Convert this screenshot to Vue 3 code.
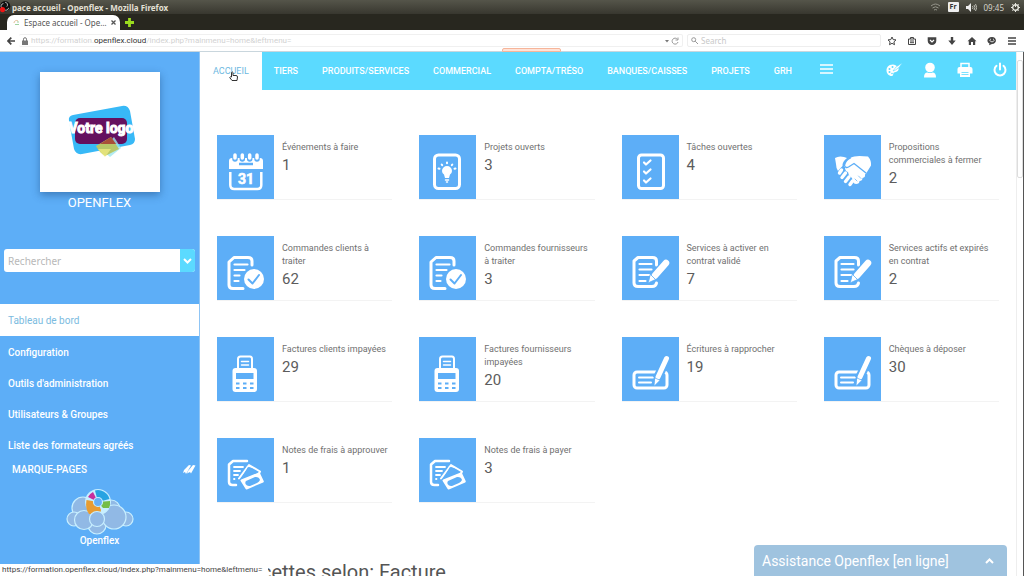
<script setup>
import { ref } from 'vue'

const query = ref('')
const webSearch = ref('')

const nav = ['TIERS', 'PRODUITS/SERVICES', 'COMMERCIAL', 'COMPTA/TRÉSO', 'BANQUES/CAISSES', 'PROJETS', 'GRH']

const sideLinks = ['Configuration', "Outils d'administration", 'Utilisateurs & Groupes', 'Liste des formateurs agréés']

const cards = [
  { icon: 'calendar', label: 'Événements à faire', count: 1 },
  { icon: 'idea', label: 'Projets ouverts', count: 3 },
  { icon: 'tasks', label: 'Tâches ouvertes', count: 4 },
  { icon: 'hands', label: 'Propositions commerciales à fermer', count: 2 },
  { icon: 'order', label: 'Commandes clients à traiter', count: 62 },
  { icon: 'order', label: 'Commandes fournisseurs à traiter', count: 3 },
  { icon: 'contract', label: 'Services à activer en contrat validé', count: 7 },
  { icon: 'contract', label: 'Services actifs et expirés en contrat', count: 2 },
  { icon: 'invoice', label: 'Factures clients impayées', count: 29 },
  { icon: 'invoice', label: 'Factures fournisseurs impayées', count: 20 },
  { icon: 'cheque', label: 'Écritures à rapprocher', count: 19 },
  { icon: 'cheque', label: 'Chèques à déposer', count: 30 },
  { icon: 'expense', label: 'Notes de frais à approuver', count: 1 },
  { icon: 'expense', label: 'Notes de frais à payer', count: 3 }
]
</script>

<template>
  <div class="window">
    <header class="titlebar">
      <svg class="rec" viewBox="0 0 14 14" aria-hidden="true">
        <circle cx="6" cy="6" r="6" fill="#111" />
        <path d="M6 1.500a3 3 0 0 1 2 5M2 8a3 3 0 0 1 2-5M10 8a3 3 0 0 1-5 2" fill="none" stroke="#ccc" />
        <circle cx="3" cy="10" r="3" fill="#f01414" />
      </svg>
      <span class="title">pace accueil - Openflex - Mozilla Firefox</span>
      <div class="tray">
        <svg width="11" height="9" viewBox="0 0 11 9" fill="none" stroke="#96968c" aria-hidden="true">
          <path d="M1 3q4.500-4 9 0M2.500 5q3-2.500 6 0M4 7q1.500-1 3 0" />
        </svg>
        <span class="lang">Fr</span>
        <svg width="11" height="9" viewBox="0 0 11 9" fill="none" stroke="#bdbdb4" aria-hidden="true">
          <path d="M0 3h2l3-3v9L2 6H0z" fill="#eee" stroke="none" />
          <path d="M6.500 3q1 1.500 0 3M8 2q2 2.500 0 5M9.500 1q2.500 3.500 0 7" />
        </svg>
        <span class="clock">09:45</span>
        <svg width="9" height="9" viewBox="0 0 9 9" fill="none" stroke="#e5e5dd" aria-hidden="true">
          <circle cx="4.500" cy="4.500" r="2.800" stroke-width="1.400" />
          <path d="M4.500 0v4M4.500 7.500V9M0 4.500h1.500M7.500 4.500H9M1.300 1.300l1 1M7.700 1.300l-1 1M1.300 7.700l1-1M7.700 7.700l-1-1" />
        </svg>
      </div>
    </header>

    <div class="tabs">
      <div class="tab">
        <svg width="7" height="7" viewBox="0 0 7 7" fill="none" aria-hidden="true">
          <path d="M1 4a2.500 2.500 0 0 1 4-2" stroke="#e4bd95" /><path d="M2 5.500h4M5 2v2" stroke="#9fd3a1" />
        </svg>
        <span class="tab-text">Espace accueil - Ope…</span>
        <button class="plain" aria-label="Fermer l'onglet">
          <svg width="5" height="5" viewBox="0 0 5 5" stroke="#555" stroke-width="1.300"><path d="M.5.5l4 4M4.500.5l-4 4" /></svg>
        </button>
      </div>
      <button class="plain" aria-label="Nouvel onglet">
        <svg width="9" height="9" viewBox="0 0 9 9" stroke="#9bdc1e" stroke-width="2.800"><path d="M4.500 0v9M0 4.500h9" /></svg>
      </button>
    </div>

    <div class="toolbar">
      <button class="plain back" aria-label="Précédent">
        <svg width="8" height="8" viewBox="0 0 8 8" fill="none" stroke="#444" stroke-width="1.700"><path d="M8 4H1.500M4.300.7L1 4l3.300 3.300" /></svg>
      </button>
      <div class="address">
        <svg width="6" height="8" viewBox="0 0 6 8" aria-hidden="true">
          <path d="M1.500 4V2.200a1.500 1.500 0 0 1 3 0V4" fill="none" stroke="#777" /><path d="M0 3.500h6V8H0z" fill="#777" />
        </svg>
        <span class="url">https://formation.<b>openflex.cloud</b>/index.php?mainmenu=home&amp;leftmenu=</span>
        <svg class="reload" width="14" height="8" viewBox="0 0 14 8" aria-hidden="true">
          <path d="M0 3h4L2 5.500z" fill="#777" />
          <path d="M12.500 2.300A3 3 0 1 0 13 5M13 .5v2.500h-2.500" fill="none" stroke="#999" />
        </svg>
      </div>
      <label class="websearch">
        <svg width="7" height="7" viewBox="0 0 7 7" fill="none" stroke="#999" aria-hidden="true"><circle cx="2.700" cy="2.700" r="2" /><path d="M4.200 4.200L7 7" /></svg>
        <input v-model="webSearch" type="text" placeholder="Search" aria-label="Search" />
      </label>
      <div class="tools">
        <button class="plain" aria-label="Marquer cette page">
          <svg width="10" height="10" viewBox="0 0 10 10" fill="none" stroke="#444"><path d="M5 1l1.200 2.600 2.800.3-2.100 2 .6 2.800L5 7.300 2.500 8.700l.6-2.800L1 3.900l2.800-.3z" /></svg>
        </button>
        <button class="plain" aria-label="Marque-pages">
          <svg width="10" height="10" viewBox="0 0 10 10" fill="none" stroke="#444"><path d="M1.500 3h7v5.500h-7zM3.500 3V1.500h3V3M3 5h4M3 6.700h4" /></svg>
        </button>
        <button class="plain" aria-label="Pocket">
          <svg width="10" height="10" viewBox="0 0 10 10"><path d="M.7 1.200h8.600v3.500a4.300 4.300 0 0 1-8.600 0z" fill="#444" /><path d="M3 4l2 2 2-2" fill="none" stroke="#fff" stroke-width="1.200" /></svg>
        </button>
        <button class="plain" aria-label="Téléchargements">
          <svg width="10" height="10" viewBox="0 0 10 10"><path d="M3.800 1h2.400v3.500h2.500L5 9 1.300 4.500h2.500z" fill="#444" /></svg>
        </button>
        <button class="plain" aria-label="Accueil">
          <svg width="10" height="10" viewBox="0 0 10 10"><path d="M5 1l4.500 4.200H8.200V9H6V6H4v3H1.800V5.200H.5z" fill="#444" /></svg>
        </button>
        <button class="plain" aria-label="Discussion">
          <svg width="10" height="10" viewBox="0 0 10 10"><path d="M5 1c5 0 5.500 6.500 0 7L2 9.300l.5-1.700C-1 6 0 1 5 1z" fill="#444" /><path d="M2.500 4.500q2.500 3 5 0M3 3.300h1M6 3.300h1" fill="none" stroke="#fff" stroke-width=".8" /></svg>
        </button>
        <button class="plain" aria-label="Menu">
          <svg width="10" height="10" viewBox="0 0 10 10" stroke="#444" stroke-width="1.600"><path d="M1 2h8M1 5h8M1 8h8" /></svg>
        </button>
      </div>
      <i class="notice"></i>
    </div>

    <div class="page">
      <aside class="sidebar">
        <div class="brand">
          <svg viewBox="0 0 120 120" role="img" aria-label="Votre logo">
            <path d="M33 43l49-9q6-1 8 5l5 28q0 5-5 6l-48 9q-6 1-8-5l-5-28q-1-5 4-6z" fill="#38b9f7" />
            <rect x="35" y="46" width="52" height="26" rx="5" fill="#64105f" />
            <path d="M62 78l12-13 7 11-11 9z" fill="#9fe6ee" opacity=".8" />
            <path d="M56 74l15-9 8 12-14 7q-6-4-9-10z" fill="#b7c769" />
            <path d="M60 72l11-7 5 7z" fill="#a84f38" />
            <path d="M58 77h13l-6 8z" fill="#f4ee85" opacity=".7" />
            <text x="61" y="61" text-anchor="middle" font-family="Roboto, sans-serif" font-size="14" font-weight="700" fill="#fff" stroke="#fff" stroke-width="1">Votre logo</text>
          </svg>
        </div>
        <p class="company">OPENFLEX</p>
        <form class="search" @submit.prevent>
          <input v-model="query" type="text" placeholder="Rechercher" aria-label="Rechercher" />
          <button aria-label="Options de recherche">
            <svg width="9" height="6" viewBox="0 0 9 6" fill="none" stroke="#fff" stroke-width="2"><path d="M1 1l3.500 3.500L8 1" /></svg>
          </button>
        </form>
        <nav class="side-nav">
          <a class="current" href="#tableau">Tableau de bord</a>
          <a v-for="item in sideLinks" :key="item" href="#">{{ item }}</a>
        </nav>
        <div class="bookmarks">
          <span>MARQUE-PAGES</span>
          <svg width="13" height="11" viewBox="0 0 13 11" fill="#fff" aria-hidden="true"><path d="M1 6l5-5 2 .5L3 10l-1-2-2 1zM5 7l5-6 2.500.5L8 9.500 7 8 4 9.500z" /></svg>
        </div>
        <div class="signature">
          <svg width="68" height="46" viewBox="0 0 68 46" aria-hidden="true">
            <g fill="#91b9e5" stroke="#c8efff" stroke-width="1.200">
              <circle cx="17" cy="19" r="11" /><circle cx="45" cy="20" r="9" />
              <circle cx="8" cy="30" r="7" /><circle cx="60" cy="30" r="7" />
              <circle cx="31" cy="36" r="9" />
              <circle cx="18" cy="31" r="9.500" /><circle cx="48" cy="28" r="12" />
            </g>
            <circle cx="32" cy="13" r="13" fill="#c8efff" />
            <path d="M32 13L20.500 11Q19 20 23 25h11l1-4z" fill="#e79c33" />
            <path d="M32 13L22 8a12 12 0 0 1 5-5z" fill="#c72f9e" />
            <path d="M32 13L29 1.500A12 12 0 0 1 43.500 10z" fill="#27a3e2" />
            <path d="M32 13l12-1a12 12 0 0 1-1 7h-6z" fill="#75bd46" />
            <circle cx="32" cy="13" r="4.500" fill="#66aff4" stroke="#c8efff" stroke-width="1.200" />
            <circle cx="31" cy="30" r="7.500" fill="#91b9e5" stroke="#c8efff" stroke-width="1.200" />
          </svg>
          <span>Openflex</span>
        </div>
      </aside>

      <main class="main">
        <nav class="topnav">
          <a class="active" href="#accueil">ACCUEIL
            <svg class="pointer" width="9" height="11" viewBox="0 0 9 11" fill="#fff" stroke="#333" aria-hidden="true"><path d="M2.500 6V1.500q1-1 1.500 0V4.500h3q1.500 0 1.500 1.500L8 9.500H3L.7 6.500q.5-1 1.800-.5z" /></svg>
          </a>
          <a v-for="item in nav" :key="item" href="#">{{ item }}</a>
          <button class="plain burger" aria-label="Plus">
            <svg width="13" height="10" viewBox="0 0 13 10" stroke="#fff" stroke-width="1.500"><path d="M0 1h13M0 5h13M0 9h13" /></svg>
          </button>
          <div class="actions">
            <button class="plain" aria-label="Thème">
              <svg width="17" height="16" viewBox="0 0 17 16">
                <path d="M7 2.500C2 2.500.5 6 .5 8.500c0 3 2.500 5.500 5 5.500 2 0 1.500-2 2-3s2-.5 3.500-1.500 2-2.500 1.500-3.500S10 2.500 7 2.500z" fill="#fff" />
                <path d="M7 9l3-4L16.500.8 13 5.500 9.500 8z" fill="#fff" stroke="#5bdaff" stroke-width=".6" />
                <g fill="#5bdaff"><circle cx="3.500" cy="7" r="1" /><circle cx="6.500" cy="5" r="1" /><circle cx="3.500" cy="10" r="1" /><circle cx="6" cy="11.500" r=".8" /></g>
              </svg>
            </button>
            <button class="plain" aria-label="Utilisateur">
              <svg width="14" height="16" viewBox="0 0 14 16" fill="#fff"><circle cx="7" cy="5.500" r="4.800" /><path d="M1 15.500q0-5 3.500-5 2.500 1.200 5 0 3.500 0 3.500 5z" /></svg>
            </button>
            <button class="plain" aria-label="Imprimer">
              <svg width="16" height="16" viewBox="0 0 16 16">
                <path d="M4 6V1.500h8V6" fill="none" stroke="#fff" stroke-width="1.500" />
                <path d="M2.500 5h11q2 0 2 2v4.500H13v3.500H3v-3.500H.5V7q0-2 2-2z" fill="#fff" />
                <path d="M4.500 10.500h7M4.500 12.500h7" stroke="#5bdaff" stroke-width=".8" />
              </svg>
            </button>
            <button class="plain" aria-label="Déconnexion">
              <svg width="14" height="16" viewBox="0 0 14 16" fill="none" stroke="#fff" stroke-width="2" stroke-linecap="round"><path d="M7 1.500v6M3.500 3.800a5.500 5.500 0 1 0 7 0" /></svg>
            </button>
          </div>
        </nav>

        <section class="cards">
          <article v-for="(card, i) in cards" :key="i" class="card">
            <svg class="icon" width="57" height="64" viewBox="0 0 57 64" fill="none" stroke="#fff" stroke-width="3" stroke-linecap="round" stroke-linejoin="round" aria-hidden="true">
              <g v-if="card.icon === 'calendar'">
                <path d="M12 34v-8q0-3 3-3h28q3 0 3 3v8z" fill="#fff" stroke="none" />
                <path d="M13.300 37v13q0 4 4 4h23q4 0 4-4V37" stroke-width="2.500" stroke-linecap="butt" />
                <path d="M18 20v4M25.300 20v4M32.700 20v4M40 20v4" stroke="#5daef7" stroke-width="5.500" />
                <path d="M18 20v3M25.300 20v3M32.700 20v3M40 20v3" stroke-width="3.500" />
                <path d="M22 29h14" stroke="#5daef7" stroke-width="2.500" stroke-linecap="butt" />
                <text x="29" y="49" text-anchor="middle" font-family="Roboto, sans-serif" font-size="14" font-weight="700" fill="#fff" stroke-width=".6">31</text>
              </g>
              <g v-else-if="card.icon === 'idea'">
                <rect x="15.500" y="20" width="25" height="33.500" rx="4" />
                <path d="M23 36a5 5 0 0 1 10 0q0 2-2 3.500L30 43h-4l-1-3.500q-2-1.500-2-3.500z" fill="#fff" stroke="none" />
                <path d="M26.500 45h3M27.500 47h1" stroke-width="1.500" />
                <path d="M19.500 33.500l1 .3M22.700 29.500l.5.700M28 27.500v.8M33.300 29.500l-.5.700M36.500 33.500l-1 .3" stroke-width="2" />
              </g>
              <g v-else-if="card.icon === 'tasks'">
                <rect x="16.500" y="20" width="25" height="33.500" rx="3" />
                <path d="M22 27.500l2 2 4.500-4M22 36.500l2 2 4.500-4M22 45.500l2 2 4.500-4" stroke-width="2.200" />
              </g>
              <g v-else-if="card.icon === 'hands'">
                <path d="M11 23q4-2.500 9-1l3 1q-5 4-4.500 8-3 3-4.500 5-2-3-2-7z" fill="#fff" stroke="none" />
                <path d="M17.500 35l-2 3M21.500 38l-3.500 4.500M25 42l-3.500 4.500M28.500 46l-2.500 3.500" stroke-width="3.400" />
                <path d="M20 32q1.500-7 7-9.500Q31 20 44 21.500q3.500 4 3 9L43 37q-1 2-2 2.500.5 3-2.500 3.500 0 3-3 3 0 3-3.500 3-2 0-3-2l-1-4-3-2.500-1-3.500q-3-.5-3-5z" fill="#fff" stroke="none" />
                <path d="M26.500 23q-5 2-6 7.500 1 3 4 1.500L30 28.500 42 38" stroke="#5daef7" stroke-width="1.300" />
                <path d="M31 44l2 2M34.500 41l2.500 2.500" stroke="#5daef7" stroke-width=".7" />
              </g>
              <g v-else-if="card.icon === 'order'">
                <path d="M35 29v-4q0-3.500-4-3.500H17L12 26V49q0 3.500 4 3.500h10" />
                <path d="M17.500 28.500h13M17.500 34h10M17.500 39.500h5M17.500 45h4" stroke-width="2.200" />
                <circle cx="37" cy="43" r="10" fill="#fff" stroke="none" />
                <path d="M31.500 43.500l4 4L42 39" stroke="#5daef7" stroke-width="2" />
              </g>
              <g v-else-if="card.icon === 'contract'">
                <path d="M34.500 29v-4q0-3.500-4-3.500H16L12 25v22q0 3.500 4 3.500h14q4 0 4.500-3.500" />
                <path d="M17.500 28h12M17.500 33.500h12M17.500 39h10M17.500 45h6" stroke-width="2.200" />
                <path d="M44 27L32 41" stroke="#5daef7" stroke-width="9" stroke-linecap="butt" />
                <path d="M44 27L33 39.500" stroke-width="6.500" />
                <path d="M28.500 38.500l5 5-6.500 3q-.7.200-.5-.6z" fill="#fff" stroke="#5daef7" stroke-width=".8" />
              </g>
              <g v-else-if="card.icon === 'invoice'">
                <path d="M15.500 34q0-3 3-3h18.500q3 0 3 3v18q0 3-3 3H18.500q-3 0-3-3z" fill="#fff" stroke="none" />
                <path d="M21 32V22q0-2.500 2.500-2.500H33q2 0 2 2.500v10z" fill="#5daef7" stroke-width="2" />
                <path d="M24.500 24.500h7M24.500 28h7" stroke-width="1.500" />
                <path d="M19 36h17.500v6H19z" fill="#5daef7" stroke="none" />
                <path d="M19 46.500h3.500M26 46.500h3.500M33 46.500h3.500M19 51h3.500M26 51h3.500M33 51h3.500" stroke="#5daef7" stroke-width="1.800" stroke-linecap="butt" />
              </g>
              <g v-else-if="card.icon === 'cheque'">
                <rect x="12" y="35" width="33" height="16" rx="3" />
                <path d="M17 40.500h14M17 45.500h12" stroke-width="2" />
                <path d="M45 21L35 42" stroke="#5daef7" stroke-width="9" stroke-linecap="butt" />
                <path d="M44.500 21.500L36 40" stroke-width="5" />
                <path d="M33 41l5 2.300-5 5q-.8.500-.8-.5z" fill="#fff" stroke="#5daef7" stroke-width=".7" />
              </g>
              <g v-else>
                <path d="M30 23H16L12 26.500V44q0 3 3.500 3H19" stroke-width="2.500" />
                <path d="M17 29h9M17 33h6M17 37h4M17 41h.5" stroke-width="1.800" />
                <path d="M22 40.500L32 27l11 6.500-1 2" stroke-width="2" fill="#5daef7" />
                <path d="M31 29l8 5-6 1.500-8 3.500z" stroke="none" fill="#5daef7" />
                <path d="M29 28h6l2 2.500z" fill="#fff" stroke="none" />
                <path d="M24.500 42.500L42 35.500l3.800 8L29.500 50.500z" fill="#fff" stroke-width="2" />
                <path d="M29 43l9-4q4-.5 5 3-1 2-3 3l-7 3q-3 .5-4.500-2-.5-2 .5-3z" fill="#5daef7" stroke="none" />
              </g>
            </svg>
            <div class="info">
              <h2>{{ card.label }}</h2>
              <strong>{{ card.count }}</strong>
            </div>
          </article>
        </section>
        <h1 class="chart-title">Recettes selon: Facture</h1>
      </main>
      <div class="scrollbar"><i></i></div>
    </div>

    <div class="status">https://formation.openflex.cloud/index.php?mainmenu=home&amp;leftmenu=</div>
    <button class="assist">
      <span>Assistance Openflex [en ligne]</span>
      <svg width="9" height="6" viewBox="0 0 9 6" fill="none" stroke="#fff" stroke-width="2"><path d="M1 5l3.500-3.500L8 5" /></svg>
    </button>
  </div>
</template>

<style>
body { background: #fff; }
</style>

<style scoped>
* { box-sizing: border-box; }
.window { position: relative; height: 100vh; display: flex; flex-direction: column; overflow: hidden; font-family: Roboto, "Liberation Sans", sans-serif; color: #666; background: #fff; }
a { color: inherit; text-decoration: none; }
svg { flex: none; display: block; }
.plain { border: 0; padding: 0; background: none; display: flex; align-items: center; }
input { min-width: 0; border: 0; outline: 0; padding: 0; background: transparent; color: #555; }

.titlebar { height: 14px; flex: none; display: flex; align-items: center; padding-right: 4px; background: linear-gradient(#55554a, #38372f); font-family: "Noto Sans", sans-serif; font-size: 8px; color: #e3e0d6; }
.rec { width: 12px; height: 12px; }
.title { font-weight: 700; white-space: nowrap; }
.tray { margin-left: auto; display: flex; align-items: center; gap: 7px; }
.lang { padding: 0 2px; background: #eee; color: #333; border-radius: 1px; line-height: 10px; font-size: 7px; font-weight: 700; }
.clock { color: #d5d3c9; }

.tabs { height: 16px; flex: none; display: flex; align-items: flex-end; gap: 5px; padding-left: 7px; background: #28271f; font-family: "Noto Sans", sans-serif; }
.tabs > .plain { height: 15px; }
.tab { width: 113px; height: 15px; display: flex; align-items: center; gap: 4px; padding: 0 6px; background: #fff; border-radius: 7px 7px 0 0; font-size: 8px; color: #555; }
.tab-text { flex: 1; white-space: nowrap; }

.toolbar { position: relative; height: 22px; flex: none; display: flex; align-items: center; gap: 4px; padding: 0 7px; background: #fff; border-bottom: 1px solid #c9d6dd; font-size: 8px; }
.back { width: 8px; }
.address { flex: 1; display: flex; align-items: center; gap: 3px; height: 13px; padding: 0 3px; border: 1px solid #f0f0f0; border-left: 0; border-radius: 2px; color: #d2d2d2; }
.url { white-space: nowrap; }
.url b { font-weight: 400; color: #333; }
.reload { margin-left: auto; }
.websearch { width: 194px; height: 13px; display: flex; align-items: center; gap: 3px; padding: 0 3px; border: 1px solid #eee; border-radius: 2px; }
.websearch input { flex: 1; font: 8px "Noto Sans", sans-serif; }
.websearch input::placeholder { color: #c8c8c8; }
.tools { display: flex; gap: 10px; padding-left: 2px; }
.notice { position: absolute; left: 49%; bottom: -1px; width: 59px; height: 4px; border: 1px solid #f6b59a; background: #ffe2d6; border-radius: 2px 2px 0 0; }

.page { flex: 1; min-height: 0; display: flex; border-right: 1px solid #555; }
.sidebar { width: 200px; flex: none; background: #5daef7; color: #fff; display: flex; flex-direction: column; border-right: 1px solid #8fc5f5; }
.brand { width: 120px; height: 120px; flex: none; margin: 20px 0 0 40px; background: #fff; box-shadow: 0 3px 8px rgba(20, 60, 110, .45); }
.company { margin: 3px 0 0; text-align: center; font-size: 13px; line-height: 16px; }
.search { display: flex; height: 23px; margin: 38px 4px 0; border-radius: 3px; overflow: hidden; background: #fff; flex: none; }
.search input { flex: 1; padding-left: 4px; font: 10px "Noto Sans", sans-serif; }
.search input::placeholder { color: #b8b8b8; }
.search button { width: 15px; border: 0; padding: 0; background: #5bdaff; display: flex; align-items: center; justify-content: center; }
.side-nav { display: flex; flex-direction: column; margin-top: 32px; font-size: 10px; font-weight: 500; }
.side-nav a { height: 31px; line-height: 31px; padding-left: 8px; }
.side-nav a.current { height: 32px; line-height: 33px; margin-bottom: 1px; background: #fff; color: #7bbbe0; font-weight: 400; }
.bookmarks { display: flex; justify-content: space-between; align-items: center; padding: 0 3px 0 12px; height: 16px; font-size: 10px; font-weight: 500; }
.signature { display: flex; flex-direction: column; align-items: center; margin-top: 12px; font-size: 10px; font-weight: 500; line-height: 12px; }

.main { flex: 1; min-width: 0; overflow: hidden; }
.topnav { height: 38px; display: flex; background: #5bdaff; color: #fff; font-size: 9px; font-weight: 500; line-height: 38px; }
.topnav > a { padding: 0 12px; white-space: nowrap; }
.topnav > a.active { position: relative; padding: 0 13px; background: #fff; color: #6db9df; font-weight: 400; }
.pointer { position: absolute; left: 29px; top: 19px; }
.burger { margin-left: 16px; height: 34px; }
.actions { margin-left: auto; display: flex; align-items: center; gap: 20px; padding-right: 9px; height: 35px; }

.cards { display: grid; grid-template-columns: repeat(4, 1fr); gap: 36px 27px; padding: 45px 17px 0 17px; }
.card { display: flex; height: 65px; border-bottom: 1px solid #f3f3f3; }
.icon { background: #5daef7; }
.info { padding: 6px 2px 0 8px; }
.info h2 { margin: 0; font-size: 9px; font-weight: 400; line-height: 13px; color: #707070; }
.info strong { display: block; font-size: 15px; font-weight: 400; line-height: 22px; color: #5c5c5c; }
.chart-title { margin: 57px 0 0 38px; font-size: 20px; font-weight: 400; line-height: 24px; color: #555; white-space: nowrap; }
.scrollbar { width: 7px; flex: none; padding-top: 8px; border-left: 1px solid #eee; background: #fff; }
.scrollbar i { display: block; height: 118px; border: 1px solid #ddd; border-radius: 2px; }

.status { position: absolute; left: 0; bottom: 0; height: 12px; padding: 0 6px 0 2px; background: #fff; font-size: 8px; line-height: 12px; color: #444; white-space: nowrap; }
.assist { position: absolute; right: 17px; bottom: 0; width: 253px; height: 31px; display: flex; align-items: center; justify-content: space-between; padding: 0 13px 0 8px; border: 0; border-radius: 4px 4px 0 0; background: #9fc3df; color: #fff; font: 14px Roboto, sans-serif; }
</style>
